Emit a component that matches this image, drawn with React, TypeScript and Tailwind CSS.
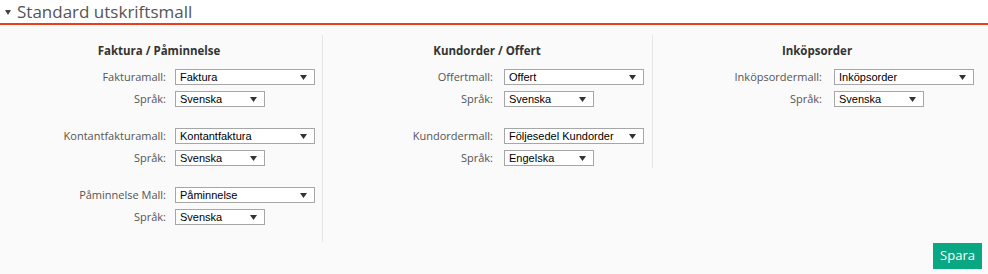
import React from "react";

const Arrow = () => (
  <svg width="7" height="5" viewBox="0 0 7 5" className="absolute right-[7px] top-[5px]">
    <path d="M0 0H7L3.5 5Z" fill="#333" />
  </svg>
);

function Select({ value, wide }: { value: string; wide?: boolean }) {
  return (
    <div
      className={`relative h-[16px] ${wide ? "w-[140px]" : "w-[90px]"} border border-[#a6a6a6] bg-white pl-[4px] text-[11px] leading-[14px] text-black`}
      style={{ fontFamily: '"Liberation Sans", Arial, sans-serif' }}
    >
      {value}
      <Arrow />
    </div>
  );
}

type Row = { label: string; value: string; wide?: boolean };

function Field({ row, labelW, gap }: { row: Row; labelW: string; gap: string }) {
  return (
    <div className={`flex items-center ${gap}`}>
      <div className={`${labelW} shrink-0 text-right text-[11px] leading-[14px] text-[#555]`}>{row.label}</div>
      <Select value={row.value} wide={row.wide} />
    </div>
  );
}

function Group({ rows, labelW, gap }: { rows: Row[]; labelW: string; gap: string }) {
  return (
    <div className="flex flex-col gap-[6px]">
      {rows.map((r, i) => (
        <Field key={i} row={r} labelW={labelW} gap={gap} />
      ))}
    </div>
  );
}

export default function App() {
  const font = { fontFamily: '"Open Sans", "Noto Sans", sans-serif' };
  return (
    <div className="w-[988px] h-[274px] bg-[#fafafa]" style={font}>
      <div className="flex h-[25px] items-center border-b-2 border-[#e8401c] bg-white pl-[5px]">
        <svg width="6" height="5" viewBox="0 0 6 5" className="mr-[6px] mt-[1px]">
          <path d="M0 0H6L3 5Z" fill="#444" />
        </svg>
        <span className="text-[17px] leading-[23px] text-[#555]">Standard utskriftsmall</span>
      </div>
      <div className="flex items-start pt-[10px]">
        <div className="w-[323px] shrink-0 border-r border-[#e6e6e6] pb-[17px]">
          <div className="w-[318px] pt-[8px] text-center text-[11.5px] font-bold leading-[16px] text-[#333]">
            Faktura / Påminnelse
          </div>
          <div className="mt-[10px] flex flex-col gap-[21px]">
            <Group
              labelW="w-[166px]"
              gap="gap-[9px]"
              rows={[
                { label: "Fakturamall:", value: "Faktura", wide: true },
                { label: "Språk:", value: "Svenska" },
              ]}
            />
            <Group
              labelW="w-[166px]"
              gap="gap-[9px]"
              rows={[
                { label: "Kontantfakturamall:", value: "Kontantfaktura", wide: true },
                { label: "Språk:", value: "Svenska" },
              ]}
            />
            <Group
              labelW="w-[166px]"
              gap="gap-[9px]"
              rows={[
                { label: "Påminnelse Mall:", value: "Påminnelse", wide: true },
                { label: "Språk:", value: "Svenska" },
              ]}
            />
          </div>
        </div>
        <div className="w-[330px] shrink-0 border-r border-[#e6e6e6] pb-[2px]">
          <div className="w-[328px] pt-[8px] text-center text-[11.5px] font-bold leading-[16px] text-[#333]">
            Kundorder / Offert
          </div>
          <div className="mt-[10px] flex flex-col gap-[21px]">
            <Group
              labelW="w-[170px]"
              gap="gap-[11px]"
              rows={[
                { label: "Offertmall:", value: "Offert", wide: true },
                { label: "Språk:", value: "Svenska" },
              ]}
            />
            <Group
              labelW="w-[170px]"
              gap="gap-[11px]"
              rows={[
                { label: "Kundordermall:", value: "Följesedel Kundorder", wide: true },
                { label: "Språk:", value: "Engelska" },
              ]}
            />
          </div>
        </div>
        <div className="flex-1">
          <div className="w-[328px] pt-[8px] text-center text-[11.5px] font-bold leading-[16px] text-[#333]">
            Inköpsorder
          </div>
          <div className="mt-[10px] flex flex-col gap-[21px]">
            <Group
              labelW="w-[169px]"
              gap="gap-[12px]"
              rows={[
                { label: "Inköpsordermall:", value: "Inköpsorder", wide: true },
                { label: "Språk:", value: "Svenska" },
              ]}
            />
          </div>
        </div>
      </div>
      <div className="flex justify-end pr-[6px] pt-[1px]">
        <button className="h-[26px] w-[49px] bg-[#0aa882] text-[13px] text-white">Spara</button>
      </div>
    </div>
  );
}
